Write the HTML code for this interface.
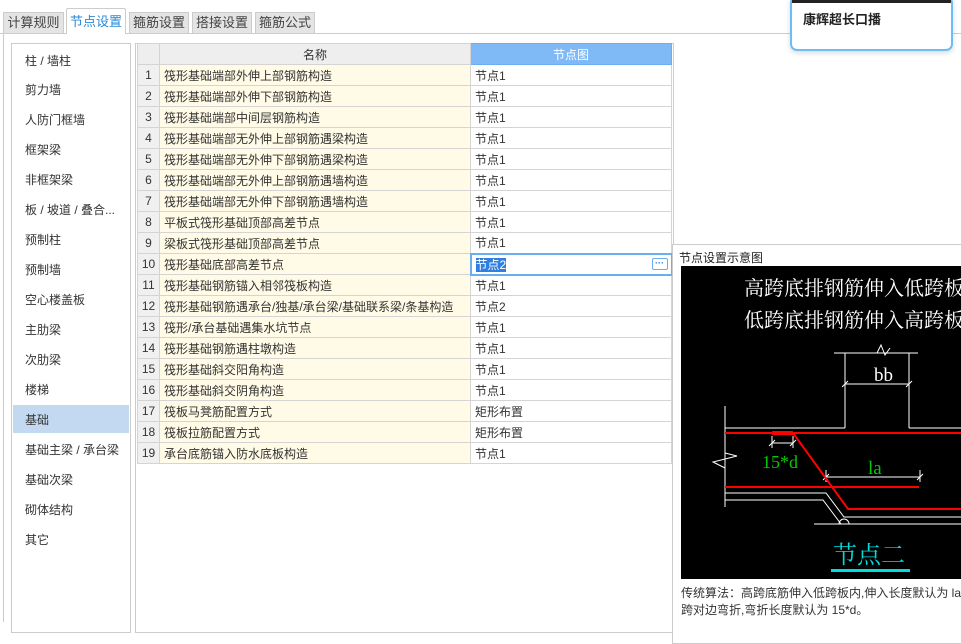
<!DOCTYPE html>
<html><head><meta charset="utf-8"><style>
*{margin:0;padding:0;box-sizing:border-box}
body{width:961px;height:622px;overflow:hidden;background:#fff;font-family:"Liberation Sans","Noto Sans CJK SC",sans-serif;font-size:12px;color:#333;position:relative}
.a{position:absolute}
.tab{position:absolute;top:12px;height:21px;background:#e4e4e4;border:1px solid #ccc;border-bottom:none;font-size:13px;color:#444;text-align:center;line-height:20px}
.li{position:absolute;left:25px;font-size:12px;color:#333}
table{position:absolute;left:137px;top:43px;border-collapse:collapse;font-size:12px}
td{border:1px solid #d4d4d4;height:21px;padding:0 4px;white-space:nowrap;color:#333}
td.n{width:22px;background:#f0f0f0;text-align:center;padding:0}
td.m{width:311px;background:#fffbe6}
td.v{width:201px}
</style></head><body>
<div class="a" style="left:0;top:33px;width:961px;border-top:1px solid #ccc"></div>
<div class="tab" style="left:3px;width:61px">计算规则</div>
<div class="tab" style="left:66px;top:8px;height:26px;width:60px;background:#fff;color:#2a8ad8;line-height:26px;border-radius:2px 2px 0 0">节点设置</div>
<div class="tab" style="left:129px;width:60px">箍筋设置</div>
<div class="tab" style="left:192px;width:60px">搭接设置</div>
<div class="tab" style="left:255px;width:60px">箍筋公式</div>
<div class="a" style="left:3px;top:33px;width:1px;height:589px;background:#ccc"></div>
<div class="a" style="left:11px;top:43px;width:120px;height:590px;border:1px solid #ccc"></div>
<div class="a" style="left:13px;top:405px;width:116px;height:28px;background:#c3d9f1"></div>
<div class="li" style="top:52px">柱 / 墙柱</div>
<div class="li" style="top:81px">剪力墙</div>
<div class="li" style="top:111px">人防门框墙</div>
<div class="li" style="top:141px">框架梁</div>
<div class="li" style="top:171px">非框架梁</div>
<div class="li" style="top:201px">板 / 坡道 / 叠合...</div>
<div class="li" style="top:231px">预制柱</div>
<div class="li" style="top:261px">预制墙</div>
<div class="li" style="top:291px">空心楼盖板</div>
<div class="li" style="top:321px">主肋梁</div>
<div class="li" style="top:351px">次肋梁</div>
<div class="li" style="top:381px">楼梯</div>
<div class="li" style="top:411px">基础</div>
<div class="li" style="top:441px">基础主梁 / 承台梁</div>
<div class="li" style="top:471px">基础次梁</div>
<div class="li" style="top:501px">砌体结构</div>
<div class="li" style="top:531px">其它</div>
<div class="a" style="left:135px;top:43px;width:539px;height:590px;border:1px solid #ccc"></div>
<table>
<tr><td class="n" style="background:#eee"></td><td class="m" style="background:#eee;text-align:center">名称</td><td class="v" style="background:#7fbaf7;color:#fff;text-align:center;border-color:#6aaef0">节点图</td></tr>
<tr><td class="n">1</td><td class="m">筏形基础端部外伸上部钢筋构造</td><td class="v">节点1</td></tr>
<tr><td class="n">2</td><td class="m">筏形基础端部外伸下部钢筋构造</td><td class="v">节点1</td></tr>
<tr><td class="n">3</td><td class="m">筏形基础端部中间层钢筋构造</td><td class="v">节点1</td></tr>
<tr><td class="n">4</td><td class="m">筏形基础端部无外伸上部钢筋遇梁构造</td><td class="v">节点1</td></tr>
<tr><td class="n">5</td><td class="m">筏形基础端部无外伸下部钢筋遇梁构造</td><td class="v">节点1</td></tr>
<tr><td class="n">6</td><td class="m">筏形基础端部无外伸上部钢筋遇墙构造</td><td class="v">节点1</td></tr>
<tr><td class="n">7</td><td class="m">筏形基础端部无外伸下部钢筋遇墙构造</td><td class="v">节点1</td></tr>
<tr><td class="n">8</td><td class="m">平板式筏形基础顶部高差节点</td><td class="v">节点1</td></tr>
<tr><td class="n">9</td><td class="m">梁板式筏形基础顶部高差节点</td><td class="v">节点1</td></tr>
<tr><td class="n">10</td><td class="m">筏形基础底部高差节点</td><td class="v" style="border:2px solid #6aaef0;position:relative"><span style="background:#2f7ee0;color:#fff">节点2</span><span style="position:absolute;right:3px;top:3px;width:16px;height:12px;border:1px solid #6aaef0;border-radius:2px;color:#2f7ee0;font-size:9px;line-height:8px;text-align:center;font-weight:bold">···</span></td></tr>
<tr><td class="n">11</td><td class="m">筏形基础钢筋锚入相邻筏板构造</td><td class="v">节点1</td></tr>
<tr><td class="n">12</td><td class="m">筏形基础钢筋遇承台/独基/承台梁/基础联系梁/条基构造</td><td class="v">节点2</td></tr>
<tr><td class="n">13</td><td class="m">筏形/承台基础遇集水坑节点</td><td class="v">节点1</td></tr>
<tr><td class="n">14</td><td class="m">筏形基础钢筋遇柱墩构造</td><td class="v">节点1</td></tr>
<tr><td class="n">15</td><td class="m">筏形基础斜交阳角构造</td><td class="v">节点1</td></tr>
<tr><td class="n">16</td><td class="m">筏形基础斜交阴角构造</td><td class="v">节点1</td></tr>
<tr><td class="n">17</td><td class="m">筏板马凳筋配置方式</td><td class="v">矩形布置</td></tr>
<tr><td class="n">18</td><td class="m">筏板拉筋配置方式</td><td class="v">矩形布置</td></tr>
<tr><td class="n">19</td><td class="m">承台底筋锚入防水底板构造</td><td class="v">节点1</td></tr>
</table>
<div class="a" style="left:672px;top:244px;width:300px;height:400px;border:1px solid #ccc;background:#fff"></div>
<div class="a" style="left:679px;top:249px;font-size:12px;color:#222">节点设置示意图</div>
<svg class="a" style="left:681px;top:266px" width="280" height="313" viewBox="0 0 280 313">
<rect width="280" height="313" fill="#000"/>
<g font-family="Liberation Serif,'Noto Serif CJK SC',serif" fill="#fff" font-size="20">
<text x="63" y="29">高跨底排钢筋伸入低跨板</text>
<text x="63" y="61">低跨底排钢筋伸入高跨板</text>
</g>
<g stroke="#fff" stroke-width="1" fill="none">
<path d="M164 162V87M228 162V87M153 87H237M196 87l4-8l4 10l5-7"/>
<path d="M164 118H228M161 121l6-6M225 121l6-6"/>
<path d="M44 140V241M44 162H164M228 162H280"/>
<path d="M91 177H112M91 170v12M112 170v12M88 180l6-6M109 180l6-6"/>
<path d="M145 211H239M145 204v12M239 204v12M142 214l6-6M236 214l6-6"/>
<path d="M44 227H145L163 251H280M44 234H142L160 258M133 258H280"/>
<path d="M56 190L32 196L44 202M44 187l12 3"/>
<path d="M158 258a5 5 0 0 1 10 0"/>
</g>
<g stroke="#f00" stroke-width="2" fill="none">
<path d="M44 167H280M112 167L167 243H280M44 221H238"/>
<path d="M91 167H112" stroke-width="4"/>
</g>
<text x="193" y="115" fill="#fff" font-family="Liberation Serif,serif" font-size="19">bb</text>
<text x="81" y="202" fill="#0c0" font-family="Liberation Serif,serif" font-size="18">15*d</text>
<text x="187" y="208" fill="#0c0" font-family="Liberation Serif,serif" font-size="19">la</text>
<text x="152" y="297" fill="#0dd" font-family="'Noto Serif CJK SC',serif" font-size="24">节点二</text>
<rect x="150" y="303" width="79" height="3" fill="#0dd"/>
</svg>
<div class="a" style="left:681px;top:585px;font-size:12px;color:#333;white-space:nowrap;line-height:17px">传统算法：高跨底筋伸入低跨板内,伸入长度默认为 la<br>跨对边弯折,弯折长度默认为 15*d。</div>
<div class="a" style="left:790px;top:-4px;width:163px;height:55px;border:2px solid #6cbdf7;border-radius:7px;background:#fff;box-shadow:0 2px 6px rgba(0,0,0,.15)"></div>
<div class="a" style="left:792px;top:0;width:159px;height:3px;background:#222"></div>
<div class="a" style="left:803px;top:9px;font-size:13px;font-weight:bold;color:#222">康辉超长口播</div>
</body></html>
